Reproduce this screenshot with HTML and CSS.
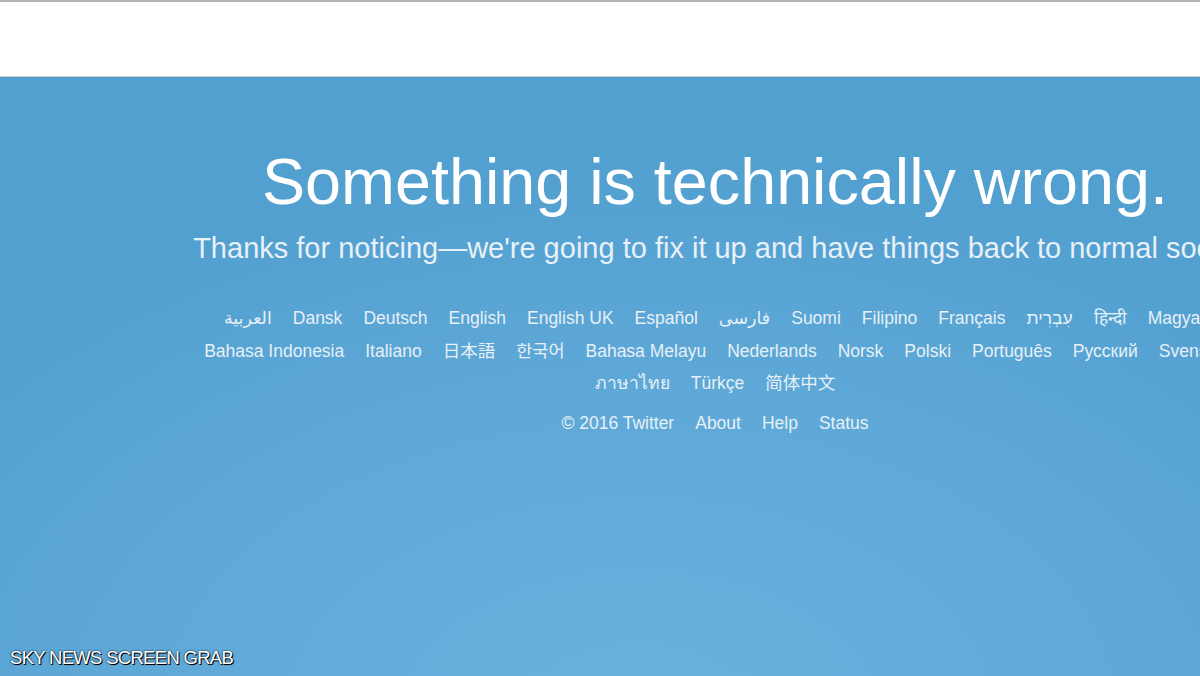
FILE: index.html
```html
<!DOCTYPE html>
<html lang="en">
<head>
  <meta charset="UTF-8" />
  <meta name="viewport" content="width=device-width, initial-scale=1" />
  <title>Twitter / Something is technically wrong</title>
  <link rel="stylesheet" href="styles.css">
</head>
<body>
  <header class="topbar"></header>

  <main class="page">
    <div class="content">
      <h1 class="headline">Something is technically wrong.</h1>
      <p class="lead">Thanks for noticing—we're going to fix it up and have things back to normal soon.</p>

      <ul class="languages">
        <li><a href="#" lang="ar">العربية</a></li>
        <li><a href="#">Dansk</a></li>
        <li><a href="#">Deutsch</a></li>
        <li><a href="#">English</a></li>
        <li><a href="#">English UK</a></li>
        <li><a href="#">Español</a></li>
        <li><a href="#" lang="fa">فارسی</a></li>
        <li><a href="#">Suomi</a></li>
        <li><a href="#">Filipino</a></li>
        <li><a href="#">Français</a></li>
        <li><a href="#" lang="he">עִבְרִית</a></li>
        <li><a href="#" lang="hi">हिन्दी</a></li>
        <li><a href="#">Magyar</a></li>
        <li><a href="#">Bahasa Indonesia</a></li>
        <li><a href="#">Italiano</a></li>
        <li><a href="#" lang="ja">日本語</a></li>
        <li><a href="#" lang="ko">한국어</a></li>
        <li><a href="#">Bahasa Melayu</a></li>
        <li><a href="#">Nederlands</a></li>
        <li><a href="#">Norsk</a></li>
        <li><a href="#">Polski</a></li>
        <li><a href="#">Português</a></li>
        <li><a href="#">Русский</a></li>
        <li><a href="#">Svenska</a></li>
        <li><a href="#" lang="th">ภาษาไทย</a></li>
        <li><a href="#">Türkçe</a></li>
        <li><a href="#" lang="zh-CN">简体中文</a></li>
      </ul>

      <ul class="footer-links">
        <li>© 2016 Twitter</li>
        <li><a href="#">About</a></li>
        <li><a href="#">Help</a></li>
        <li><a href="#">Status</a></li>
      </ul>
    </div>
  </main>

  <div class="watermark">SKY NEWS SCREEN GRAB</div>
</body>
</html>
```

FILE: styles.css
```css
html, body {
  margin: 0;
  height: 100%;
}
body {
  font-family: 'Liberation Sans', Arial, 'DejaVu Sans', 'Noto Sans CJK JP', sans-serif;
  background: #5aa6d5;
  overflow: hidden;
  position: relative;
}
.topbar {
  height: 74px;
  background: #fff;
  border-top: 2px solid #b4b4b4;
  border-bottom: 1px solid #cfd8de;
}
.page {
  box-sizing: border-box;
  height: calc(100% - 77px);
  padding-top: 68px;
  background: radial-gradient(ellipse 900px 560px at 640px 640px, #6ab2dd 0%, #5fa9d8 55%, #52a0d0 100%);
  border-top: 1px solid #4a90c0;
}
.content {
  width: 1430px;
  text-align: center;
}
.headline {
  margin: 0;
  font-size: 64.7px;
  line-height: 72px;
  font-weight: normal;
  color: #fff;
  white-space: nowrap;
}
.lead {
  margin: 13px 0 0;
  font-size: 29px;
  line-height: 34px;
  color: #e8f1f8;
  white-space: nowrap;
}
.languages,
.footer-links {
  list-style: none;
  padding: 0;
  display: flex;
  flex-wrap: wrap;
  justify-content: center;
  column-gap: 21px;
  font-size: 17.5px;
  line-height: 32.5px;
  color: #e6f0f7;
}
.languages {
  width: 1060px;
  margin: 37px auto 0;
}
.footer-links {
  margin: 7px 0 0;
}
.languages a,
.footer-links a {
  color: #e6f0f7;
  text-decoration: none;
  white-space: nowrap;
}
.watermark {
  position: absolute;
  left: 10px;
  bottom: 7px;
  font-size: 18.5px;
  letter-spacing: -0.7px;
  color: #fff;
  text-shadow: 1px 1px 0 #000, 0 0 2px #000;
}
```
